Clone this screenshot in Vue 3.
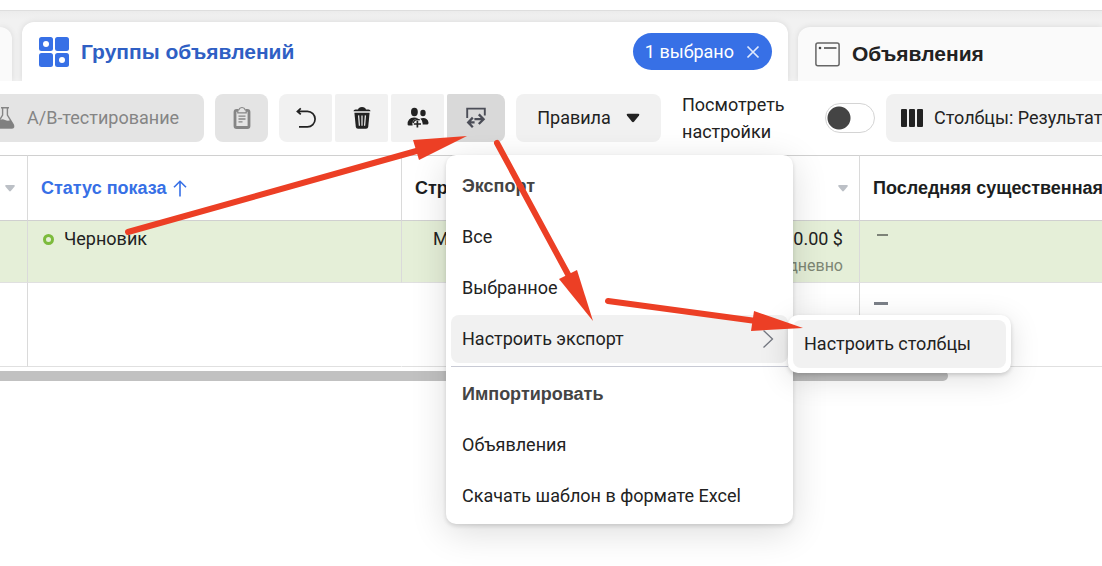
<script setup>
const exportItems = ['Все', 'Выбранное']
const importItems = ['Объявления', 'Скачать шаблон в формате Excel']
</script>

<template>
  <div class="page">
    <div class="topline"></div>

    <nav class="tabs">
      <div class="tab tab-prev"></div>
      <div class="tab tab-active">
        <button class="tab-button" type="button">
          <svg class="tab-icon" width="30" height="30" viewBox="0 0 30 30" aria-hidden="true">
            <g fill="#3770e6">
              <rect x="0" y="0" width="14" height="14" rx="2.5" />
              <rect x="16" y="0" width="14" height="14" rx="2.5" />
              <rect x="0" y="16" width="14" height="14" rx="2.5" />
              <rect x="16" y="16" width="14" height="14" rx="2.5" />
            </g>
            <circle cx="7" cy="7" r="3" fill="#fff" />
            <circle cx="23" cy="23" r="3" fill="#fff" />
          </svg>
          <span>Группы объявлений</span>
        </button>
        <button class="chip" type="button">
          <span>1 выбрано</span>
          <svg width="14" height="14" viewBox="0 0 14 14" aria-hidden="true">
            <path d="M1.5 1.5 12.5 12.5M12.5 1.5 1.5 12.5" stroke="#dfe9fd" stroke-width="1.7" fill="none" />
          </svg>
        </button>
      </div>
      <div class="tab tab-next">
        <button class="tab-button" type="button">
          <svg class="tab-icon" width="25" height="25" viewBox="0 0 25 25" aria-hidden="true">
            <rect x="0.9" y="0.9" width="23.2" height="22.8" rx="2" fill="none" stroke="#666" stroke-width="1.5" />
            <circle cx="5" cy="6" r="1.3" fill="#444" />
            <path d="M9 6H21.5" stroke="#444" stroke-width="1.5" />
          </svg>
          <span>Объявления</span>
        </button>
      </div>
    </nav>

    <div class="toolbar">
      <button class="btn btn-test" type="button" disabled>
        <svg width="20" height="24" viewBox="0 0 20 24" aria-hidden="true">
          <path d="M6 1.7H14M7.6 1.5V9L1.8 18.6Q0.4 22 3.4 22H16.6Q19.6 22 18.2 18.6L12.4 9V1.5" fill="none" stroke="#858585" stroke-width="1.4" />
          <path d="M4 14.8Q7 12.4 10 14T15.6 14L18.2 18.6Q19.6 22 16.6 22H3.4Q0.4 22 1.8 18.6Z" fill="#808080" />
        </svg>
        <span>А/В-тестирование</span>
      </button>
      <button class="btn btn-clip" type="button" aria-label="Вставить" disabled>
        <svg width="18" height="24" viewBox="0 0 18 24" aria-hidden="true">
          <path d="M5 4.4H3.6Q2 4.4 2 6V19.9Q2 21.5 3.6 21.5H14.4Q16 21.5 16 19.9V6Q16 4.4 14.4 4.4H13" fill="none" stroke="#858585" stroke-width="2.8" />
          <path d="M4.8 6.8V4.6Q4.8 3.8 5.8 3.8Q6.6 1.5 9 1.5T12.2 3.8Q13.2 3.8 13.2 4.6V6.8Z" fill="#e4e4e4" stroke="#858585" stroke-width="1.2" />
          <path d="M5.5 10.2H12.5M5.5 13H12.5M5.5 15.8H9.5" stroke="#858585" stroke-width="1.3" />
        </svg>
      </button>

      <div class="group">
        <button class="btn seg" type="button" aria-label="Отменить">
          <svg width="20" height="22" viewBox="0 0 20 22" aria-hidden="true">
            <path d="M1.5 4.4H11.4A7.7 7.7 0 0 1 11.4 19.8H3M4.8 1.4 1.4 4.4 4.8 7.4" fill="none" stroke="#222" stroke-width="1.7" />
          </svg>
        </button>
        <button class="btn seg" type="button" aria-label="Удалить">
          <svg width="18" height="24" viewBox="0 0 18 24" aria-hidden="true">
            <path d="M0.5 5.2Q0.5 3.6 2.5 3.6H5Q5.6 1 9 1T13 3.6H15.5Q17.5 3.6 17.5 5.2Z" fill="#222" />
            <path d="M1.4 6.8H16.6L15.2 21Q15 22.8 13 22.8H5Q3 22.8 2.8 21Z" fill="#222" />
            <path d="M5.6 9.4 6.4 19.8M9 9.4V19.8M12.4 9.4 11.6 19.8" stroke="#f1f1f1" stroke-width="1.2" />
          </svg>
        </button>
        <button class="btn seg" type="button" aria-label="Добавить пользователей">
          <svg width="22" height="22" viewBox="0 0 22 22" aria-hidden="true">
            <g fill="#222">
              <ellipse cx="7.4" cy="5" rx="3.4" ry="4.2" />
              <ellipse cx="16" cy="6" rx="2.7" ry="3.3" />
              <path d="M0.6 17.4Q0.4 10.8 7 10.4Q9.6 10.4 11 11.6L5.6 18.4H2Q0.6 18.4 0.6 17.4Z" />
              <path d="M13.4 11.4Q20.5 9.8 21.5 15.6Q21.7 17.4 20.5 17.4H15.6Q16 14 13.4 11.4Z" />
            </g>
            <circle cx="10.4" cy="16.8" r="5" fill="#f1f1f1" />
            <path d="M6.2 16A4.4 4.4 0 0 1 12.8 13" fill="none" stroke="#222" stroke-width="1.4" />
            <path d="M10.4 13.4V20.6M6.8 17H14" stroke="#222" stroke-width="1.7" />
          </svg>
        </button>
        <div class="menu-host">
          <button class="btn seg seg-on" type="button" aria-label="Экспорт и импорт" aria-expanded="true">
            <svg width="20" height="22" viewBox="0 0 20 22" aria-hidden="true">
              <path d="M1.2 11V1.6H18.8V8.4" fill="none" stroke="#4b4d57" stroke-width="1.9" />
              <path d="M8.6 15.4H2.6M6.8 10.6 2.2 15.4 6.8 20.2M8.4 12.2H17.4M12.8 7.4 17.6 12.2 12.8 17" fill="none" stroke="#4b4d57" stroke-width="2.3" />
            </svg>
          </button>

          <div class="menu" role="menu">
            <h3 class="menu-title">Экспорт</h3>
            <button v-for="item in exportItems" :key="item" class="item" type="button" role="menuitem">{{ item }}</button>
            <div class="sub-host">
              <button class="item item-on" type="button" role="menuitem">
                <span>Настроить экспорт</span>
                <svg width="12" height="20" viewBox="0 0 12 20" aria-hidden="true">
                  <path d="M1.5 1.5 10.5 10 1.5 18.5" fill="none" stroke="#737780" stroke-width="1.3" />
                </svg>
              </button>
              <div class="submenu" role="menu">
                <button class="item item-on" type="button" role="menuitem">Настроить столбцы</button>
              </div>
            </div>
            <hr class="divider" />
            <h3 class="menu-title">Импортировать</h3>
            <button v-for="item in importItems" :key="item" class="item" type="button" role="menuitem">{{ item }}</button>
          </div>
        </div>
      </div>

      <button class="btn btn-rules" type="button">
        <span>Правила</span>
        <svg width="14" height="10" viewBox="0 0 14 10" aria-hidden="true">
          <path d="M1.6 0.8H12.4Q14 1 13 2.4L8.2 8.6Q7 9.8 5.8 8.6L1 2.4Q0 1 1.6 0.8Z" fill="#222" />
        </svg>
      </button>

      <label class="view-label" for="view-settings">Посмотреть настройки</label>
      <input id="view-settings" class="toggle" type="checkbox" role="switch" />

      <button class="btn btn-cols" type="button">
        <svg width="22" height="18" viewBox="0 0 22 18" aria-hidden="true">
          <g fill="#222">
            <rect x="0" y="0" width="6" height="18" rx="1" />
            <rect x="8" y="0" width="6" height="18" rx="1" />
            <rect x="16" y="0" width="6" height="18" rx="1" />
          </g>
        </svg>
        <span>Столбцы: Результат</span>
      </button>
    </div>

    <table class="grid">
      <colgroup>
        <col class="c-first" />
        <col class="c-status" />
        <col class="c-strategy" />
        <col class="c-budget" />
        <col class="c-edit" />
      </colgroup>
      <thead>
        <tr>
          <th class="sorter">
            <svg width="10" height="7" viewBox="0 0 10 7" aria-hidden="true"><path d="M1 0H9Q10.4 0.4 9.4 1.8L5.8 6Q5 6.8 4.2 6L0.6 1.8Q-0.4 0.4 1 0Z" fill="#bcc0c6" /></svg>
          </th>
          <th class="sorted">
            <a href="#">
              <span>Статус показа</span>
              <svg width="14" height="17" viewBox="0 0 14 17" aria-hidden="true"><path d="M7 16.5V1.5M1 7.3 7 1.3 13 7.3" fill="none" stroke="#3770e6" stroke-width="1.6" /></svg>
            </a>
          </th>
          <th>Стр</th>
          <th class="sorter last-sorter">
            <svg width="10" height="7" viewBox="0 0 10 7" aria-hidden="true"><path d="M1 0H9Q10.4 0.4 9.4 1.8L5.8 6Q5 6.8 4.2 6L0.6 1.8Q-0.4 0.4 1 0Z" fill="#bcc0c6" /></svg>
          </th>
          <th>Последняя существенная</th>
        </tr>
      </thead>
      <tbody>
        <tr class="row-selected">
          <td></td>
          <td><span class="status"><i class="dot"></i>Черновик</span></td>
          <td class="strategy">М</td>
          <td class="budget">0.00 $<small>дневно</small></td>
          <td><i class="dash dash-thin"></i></td>
        </tr>
        <tr class="row-total">
          <td></td>
          <td></td>
          <td></td>
          <td></td>
          <td><i class="dash"></i></td>
        </tr>
      </tbody>
    </table>
    <div class="scrollbar"></div>

    <svg class="arrows" width="1102" height="566" viewBox="0 0 1102 566" aria-hidden="true">
      <g stroke="#ec3f25" stroke-width="6" stroke-linecap="round">
        <path d="M128 232 420 150" />
        <path d="M497 143 570 278" />
        <path d="M608 301 756 321" />
      </g>
      <g fill="#ec3f25">
        <path d="M413 140 467 136 419 160Z" />
        <path d="M559 279 577 270 593 321Z" />
        <path d="M754 311 803 328 751 331Z" />
      </g>
    </svg>
  </div>
</template>

<style>
body {
  margin: 0;
  background: #fff;
}
</style>

<style scoped>
.page {
  position: relative;
  min-height: 100vh;
  overflow: hidden;
  background: #fff;
  color: #222;
  font: 18px/24px Roboto, "Liberation Sans", Arial, sans-serif;
}
button {
  margin: 0;
  border: 0;
  padding: 0;
  background: none;
  color: inherit;
  font: inherit;
  text-align: left;
  white-space: nowrap;
}
svg {
  flex: none;
  display: block;
}
.topline {
  height: 10px;
  border-bottom: 1px solid #dedede;
}
.tabs {
  display: grid;
  grid-template-columns: 12px minmax(0, 766fr) minmax(0, 304fr);
  align-items: end;
  gap: 10px;
  height: 70px;
  background: linear-gradient(#ececec, #f1f1f1 8px);
}
.tab {
  box-sizing: border-box;
  display: flex;
  align-items: center;
  justify-content: space-between;
  border-radius: 12px 12px 0 0;
  height: 54px;
  background: #fafafa;
  box-shadow: 0 0 6px rgba(0, 0, 0, 0.1);
}
.tab-prev {
  border-top-left-radius: 0;
}
.tab-active {
  height: 59px;
  padding: 0 16px 0 17px;
  background: #fff;
  color: #2f5fc4;
}
.tab-next {
  padding-left: 17px;
  border-top-right-radius: 0;
}
.tab-button,
.menu-title,
th {
  font-family: "Liberation Sans", Arial, sans-serif;
  font-weight: 700;
}
.tab-button {
  display: flex;
  align-items: center;
  gap: 12px;
  font-size: 21px;
}
.chip {
  display: flex;
  align-items: center;
  gap: 12px;
  height: 37px;
  padding: 0 12px;
  border-radius: 19px;
  background: #3770e6;
  color: #fff;
}
.toolbar {
  position: relative;
  z-index: 2;
  display: flex;
  align-items: center;
  height: 74px;
  background: #fff;
}
.btn {
  box-sizing: border-box;
  display: flex;
  flex: none;
  align-items: center;
  justify-content: center;
  height: 48px;
  border-radius: 8px;
  background: #f1f1f1;
}
.btn-test {
  justify-content: flex-start;
  gap: 12px;
  width: 216px;
  margin-left: -12px;
  padding-left: 7px;
  background: #e4e4e4;
  color: #858585;
}
.btn-clip {
  width: 53px;
  margin-left: 11px;
  background: #e4e4e4;
}
.group {
  display: flex;
  gap: 3px;
  margin-left: 11px;
}
.seg {
  width: 53px;
  border-radius: 2px;
}
.seg:first-child {
  border-radius: 8px 2px 2px 8px;
}
.seg.seg-on {
  width: 58px;
  border-radius: 2px 8px 8px 2px;
  background: #d9d9d9;
}
.menu-host,
.sub-host {
  position: relative;
}
.menu {
  position: absolute;
  top: 61px;
  left: -1px;
  box-sizing: border-box;
  display: flex;
  flex-direction: column;
  gap: 3px;
  width: 347px;
  padding: 7px 5px 4px;
  border-radius: 10px;
  background: #fff;
  box-shadow: 0 2px 4px rgba(0, 0, 0, 0.14), 0 8px 36px rgba(0, 0, 0, 0.14);
}
.menu-title {
  margin: 0;
  padding: 0 11px;
  color: #444;
  font-size: 18px;
  line-height: 48px;
}
.item {
  box-sizing: border-box;
  display: flex;
  align-items: center;
  justify-content: space-between;
  width: 100%;
  height: 48px;
  padding: 0 14px 0 11px;
  border-radius: 8px;
}
.item-on {
  background: #f1f1f1;
}
.divider {
  width: 100%;
  height: 1px;
  margin: 0;
  border: 0;
  background: #c8cad4;
}
.submenu {
  position: absolute;
  top: 0;
  left: 337px;
  box-sizing: border-box;
  width: 223px;
  padding: 5px;
  border-radius: 10px;
  background: #fff;
  box-shadow: 0 2px 4px rgba(0, 0, 0, 0.16), 0 6px 30px rgba(0, 0, 0, 0.13);
}
.btn-rules {
  gap: 15px;
  width: 145px;
  margin-left: 11px;
}
.view-label {
  flex: none;
  width: 143px;
  margin-left: 21px;
  line-height: 27px;
}
.toggle {
  appearance: none;
  flex: none;
  box-sizing: border-box;
  width: 50px;
  height: 30px;
  margin: 0;
  border: 1px solid #d4d4d4;
  border-radius: 15px;
  background: radial-gradient(circle at 13px 14px, #444 11px, #fff 12px);
}
.btn-cols {
  flex: 1 0 auto;
  justify-content: flex-start;
  gap: 11px;
  margin-left: 11px;
  padding-left: 15px;
  border-radius: 8px 0 0 8px;
}
.grid {
  width: 100%;
  table-layout: fixed;
  border-collapse: separate;
  border-spacing: 0;
}
.c-first {
  width: 28px;
}
.c-status {
  width: 374px;
}
.c-strategy {
  width: 250px;
}
.c-budget {
  width: 208px;
}
th {
  box-sizing: border-box;
  height: 66px;
  padding: 0 0 0 13px;
  border-top: 1px solid #d0d0d0;
  border-right: 1px solid #dadada;
  border-bottom: 1px solid #d0d0d0;
  color: #1c1e21;
  text-align: left;
  white-space: nowrap;
}
th:last-child,
td:last-child {
  border-right: 0;
}
th.sorter {
  padding: 0 11px 0 5px;
}
th.last-sorter svg {
  margin-left: auto;
}
.sorted a {
  display: flex;
  align-items: center;
  gap: 6px;
  color: #3770e6;
  text-decoration: none;
}
td {
  box-sizing: border-box;
  height: 62px;
  padding: 6px 16px 0 15px;
  border-right: 1px solid #dadada;
  border-bottom: 1px solid #e0e0e0;
  vertical-align: top;
}
.row-selected td {
  background: #e5efd8;
}
.status {
  display: flex;
  align-items: center;
}
.dot {
  box-sizing: border-box;
  width: 11px;
  height: 11px;
  margin-right: 10px;
  border: 3px solid #7cbb3c;
  border-radius: 50%;
}
.strategy {
  padding-left: 31px;
}
.budget {
  text-align: right;
}
.budget small {
  display: block;
  margin-top: 3px;
  color: #7d8674;
  font-size: 16px;
}
.row-total td {
  height: 84px;
  padding-left: 14px;
}
.row-total td:nth-child(2) {
  border-right-color: transparent;
}
.dash {
  display: block;
  width: 14px;
  height: 3px;
  margin-top: 13px;
  background: #7b8088;
}
.dash-thin {
  width: 11px;
  height: 2px;
  margin: 7px 0 0 2px;
  background: #7d8378;
}
.scrollbar {
  width: 86%;
  height: 10px;
  margin-top: 4px;
  border-radius: 0 5px 5px 0;
  background: #c1c1c1;
}
.arrows {
  position: absolute;
  z-index: 3;
  top: 0;
  left: 0;
  pointer-events: none;
}
</style>
